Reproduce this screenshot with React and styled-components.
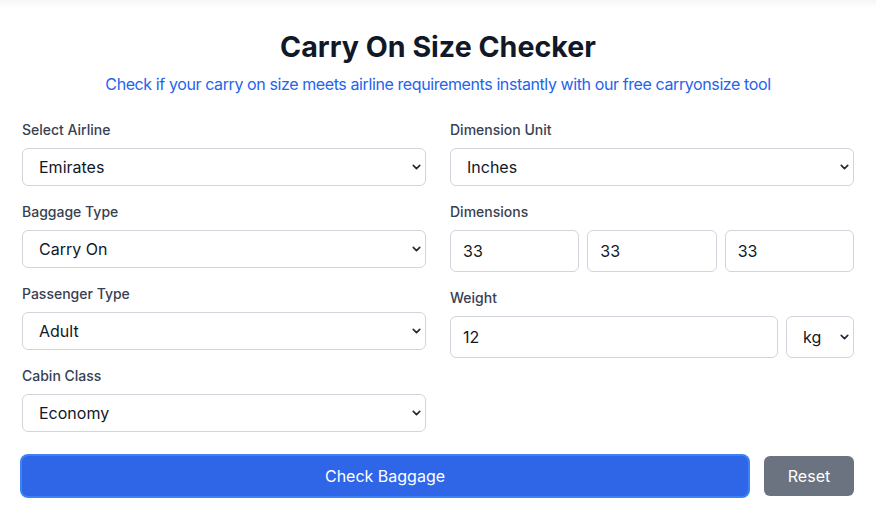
import React from "react";
import styled, { createGlobalStyle } from "styled-components";
import { ChevronDown } from "lucide-react";

const GlobalStyle = createGlobalStyle`
  * { box-sizing: border-box; }
  body {
    margin: 0;
    background: #ffffff;
    font-family: "Inter", "Liberation Sans", sans-serif;
    color: #111827;
  }
`;

export default function App() {
  return (
    <Page>
      <GlobalStyle />
      <Card>
        <Title>Carry On Size Checker</Title>
        <Subtitle>
          Check if your carry on size meets airline requirements instantly with our free carryonsize tool
        </Subtitle>
        <Grid>
          <Column>
            <Field>
              <Label>Select Airline</Label>
              <SelectBox value="Emirates" options={["Emirates", "Qatar Airways", "Lufthansa"]} />
            </Field>
            <Field>
              <Label>Baggage Type</Label>
              <SelectBox value="Carry On" options={["Carry On", "Checked"]} />
            </Field>
            <Field>
              <Label>Passenger Type</Label>
              <SelectBox value="Adult" options={["Adult", "Child", "Infant"]} />
            </Field>
            <Field>
              <Label>Cabin Class</Label>
              <SelectBox value="Economy" options={["Economy", "Business", "First"]} />
            </Field>
          </Column>
          <Column>
            <Field>
              <Label>Dimension Unit</Label>
              <SelectBox value="Inches" options={["Inches", "Centimeters"]} />
            </Field>
            <Field>
              <Label>Dimensions</Label>
              <DimRow>
                <Input defaultValue="33" />
                <Input defaultValue="33" />
                <Input defaultValue="33" />
              </DimRow>
            </Field>
            <Field>
              <Label>Weight</Label>
              <WeightRow>
                <Input defaultValue="12" />
                <SelectBox value="kg" options={["kg", "lb"]} tall narrow />
              </WeightRow>
            </Field>
          </Column>
        </Grid>
        <Actions>
          <PrimaryButton>Check Baggage</PrimaryButton>
          <SecondaryButton>Reset</SecondaryButton>
        </Actions>
      </Card>
    </Page>
  );
}

function SelectBox({ value, options, tall, narrow }) {
  return (
    <SelectWrap $narrow={narrow}>
      <Select defaultValue={value} $tall={tall}>
        {options.map((o) => (
          <option key={o}>{o}</option>
        ))}
      </Select>
      <Chevron>
        <ChevronDown size={13} strokeWidth={3} />
      </Chevron>
    </SelectWrap>
  );
}

const Page = styled.main`
  width: 100%;
  min-height: 100vh;
  box-shadow: inset 0 10px 10px -8px rgba(0, 0, 0, 0.06);
`;

const Card = styled.div`
  padding: 29px 22px 20px;
`;

const Title = styled.h1`
  margin: 0 0 7px;
  text-align: center;
  font-size: 28.6px;
  line-height: 36px;
  font-weight: 700;
  color: #111827;
`;

const Subtitle = styled.p`
  margin: 0 0 24px;
  text-align: center;
  font-size: 16px;
  line-height: 24px;
  letter-spacing: -0.4px;
  color: #2563eb;
`;

const Grid = styled.div`
  display: grid;
  grid-template-columns: 1fr 1fr;
  column-gap: 24px;
`;

const Column = styled.div`
  display: flex;
  flex-direction: column;
  gap: 16px;
`;

const Field = styled.div`
  display: flex;
  flex-direction: column;
  gap: 8px;
`;

const Label = styled.label`
  font-size: 14px;
  line-height: 20px;
  font-weight: 500;
  color: #374151;
`;

const SelectWrap = styled.div`
  position: relative;
  width: ${(p) => (p.$narrow ? "68px" : "100%")};
  flex-shrink: 0;
`;

const Select = styled.select`
  appearance: none;
  width: 100%;
  height: ${(p) => (p.$tall ? "42px" : "38px")};
  padding: 0 24px 0 16px;
  border: 1px solid #d1d5db;
  border-radius: 6px;
  background: #ffffff;
  font-family: inherit;
  font-size: 16px;
  color: #111827;
  outline: none;
`;

const Chevron = styled.span`
  position: absolute;
  right: 3px;
  top: 50%;
  transform: translateY(-50%);
  display: flex;
  color: #1f2937;
  pointer-events: none;
`;

const DimRow = styled.div`
  display: grid;
  grid-template-columns: repeat(3, 1fr);
  gap: 8px;
`;

const WeightRow = styled.div`
  display: flex;
  gap: 8px;
`;

const Input = styled.input`
  width: 100%;
  min-width: 0;
  height: 42px;
  padding: 0 12px;
  border: 1px solid #d1d5db;
  border-radius: 6px;
  font-family: inherit;
  font-size: 16px;
  color: #111827;
  outline: none;
`;

const Actions = styled.div`
  display: flex;
  align-items: center;
  gap: 16px;
  margin-top: 24px;
`;

const PrimaryButton = styled.button`
  flex: 1;
  height: 40px;
  border: none;
  border-radius: 6px;
  background: #2f66e8;
  box-shadow: 0 0 0 2px #3b82f6;
  color: #ffffff;
  font-family: inherit;
  font-size: 16px;
  cursor: pointer;
`;

const SecondaryButton = styled.button`
  width: 90px;
  height: 40px;
  border: none;
  border-radius: 6px;
  background: #6b7280;
  color: #ffffff;
  font-family: inherit;
  font-size: 16px;
  cursor: pointer;
`;
